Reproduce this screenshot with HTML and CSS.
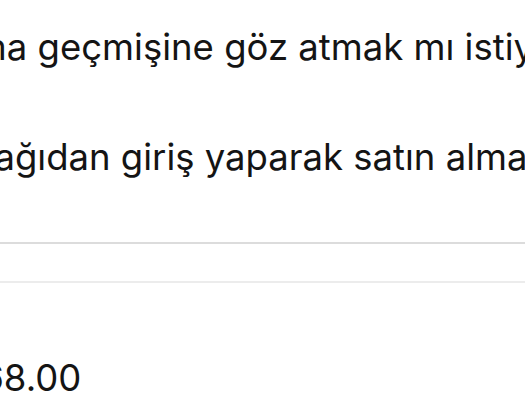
FILE: index.html
```html
<!DOCTYPE html>
<html lang="tr">
<head>
    <meta charset="UTF-8">
    <meta name="viewport" content="width=device-width, initial-scale=1.0">
    <title>Satın Alma Geçmişi</title>
    <link rel="stylesheet" href="styles.css">
</head>
<body>
    <div class="page">
        <div class="intro">
            <p class="question">Satın alma geçmişine göz atmak mı istiyorsunuz?</p>
            <p class="hint">Şimdi aşağıdan giriş yaparak satın alma geçmişinizi görüntüleyin.</p>
        </div>
        <div class="divider"></div>
        <div class="summary">
            <div class="total-row">
                <span class="total-label">Tutar</span>
                <span class="total-price">$68.00</span>
            </div>
        </div>
    </div>
</body>
</html>
```

FILE: styles.css
```css
body {
    margin: 0;
    background: #ffffff;
    color: #141414;
    font-family: Inter, "Noto Sans", sans-serif;
    overflow: hidden;
}
.page {
    width: 1400px;
    margin-left: -151px;
}
.intro {
    padding-top: 26px;
}
.question, .hint {
    margin: 0;
    font-size: 36.5px;
    line-height: 42px;
}
.hint {
    margin-top: 68px;
}
.divider {
    margin-top: 64px;
    border-top: 2px solid #dcdcdc;
}
.summary {
    margin-top: 37px;
    border-top: 2px solid #ececec;
    padding-top: 74px;
}
.total-row {
    display: flex;
    gap: 20px;
    font-size: 36.5px;
    line-height: 42px;
}
```
